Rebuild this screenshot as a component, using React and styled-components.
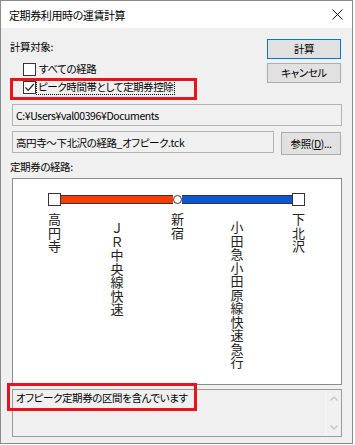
import React from 'react';
import styled, { createGlobalStyle } from 'styled-components';

const GlobalStyle = createGlobalStyle`
  html, body {
    margin: 0;
    padding: 0;
    background: #ffffff;
  }
  body {
    font-family: "Noto Sans CJK JP", "Noto Sans", sans-serif;
    font-size: 10.5px;
    letter-spacing: -0.4px;
    color: #000;
    font-feature-settings: "palt";
  }
`;

// Window frame
const Window = styled.div`
  box-sizing: border-box;
  width: 353px;
  height: 444px;
  border: 1px solid #8a8a8a;
  background: #f0f0f0;
  display: flex;
  flex-direction: column;
`;

const TitleBar = styled.div`
  height: 27px;
  background: #ffffff;
  display: flex;
  align-items: center;
  justify-content: space-between;
  padding: 0 9px 0 8px;
  font-size: 11px;
  line-height: 16px;
`;

const CloseButton = styled.div`
  width: 12px;
  height: 12px;
  display: flex;
  align-items: center;
  justify-content: center;
`;

const Body = styled.div`
  flex: 1;
  display: flex;
  flex-direction: column;
  padding: 11px 10px 0 11px;
`;

const TopRow = styled.div`
  display: flex;
  justify-content: space-between;
`;

const LeftCol = styled.div`
  display: flex;
  flex-direction: column;
`;

const RightCol = styled.div`
  display: flex;
  flex-direction: column;
  gap: 4px;
  margin-right: 1px;
`;

const Label = styled.div`
  line-height: 16px;
  height: 16px;
  margin-left: -2px;
  margin-top: ${props => props.$top || 0}px;
`;

const CheckRow = styled.div`
  position: relative;
  height: 18px;
  display: flex;
  align-items: center;
  padding-left: 11px;
  margin-top: ${props => props.$top || 0}px;
`;

const Box = styled.div`
  box-sizing: border-box;
  width: 13px;
  height: 13px;
  border: 1px solid #333;
  background: #fff;
  display: flex;
  align-items: center;
  justify-content: center;
`;

const CheckText = styled.span`
  line-height: 14px;
  margin-left: ${props => (props.$focus ? 0 : 1)}px;
  padding: 0 1px;
  border: 1px ${props => (props.$focus ? 'dotted #000' : 'solid transparent')};
`;

const Highlight = styled.div`
  position: absolute;
  box-sizing: border-box;
  border: 3px solid #e8141c;
  pointer-events: none;
  left: ${props => props.$left}px;
  top: ${props => props.$top}px;
  width: ${props => props.$w}px;
  height: ${props => props.$h}px;
`;

const Button = styled.div`
  box-sizing: border-box;
  width: ${props => props.$w || 74}px;
  height: ${props => props.$h || 20}px;
  background: #e1e1e1;
  border: 1px solid ${props => (props.$primary ? '#0078d7' : '#adadad')};
  display: flex;
  align-items: center;
  justify-content: center;
  line-height: 14px;
  margin-top: ${props => props.$top || 0}px;
  u {
    text-decoration: underline;
  }
`;

const Field = styled.div`
  box-sizing: border-box;
  width: ${props => props.$w || 330}px;
  height: 22px;
  border: 1px solid #b4b4b4;
  background: #f0f0f0;
  display: flex;
  align-items: center;
  padding-left: 3px;
  margin-top: ${props => props.$top || 0}px;
`;

const FileRow = styled.div`
  display: flex;
  align-items: flex-start;
  justify-content: space-between;
  margin-top: 5px;
  padding-right: 1px;
`;

// Route diagram
const RoutePanel = styled.div`
  box-sizing: border-box;
  width: 330px;
  height: 207px;
  margin-top: 3px;
  border: 1px solid #8c8c8c;
  background: #fff;
  padding: 14px 0 0 35px;
  display: flex;
  align-items: flex-start;
`;

const Column = styled.div`
  width: ${props => props.$w}px;
  display: flex;
  flex-direction: column;
  align-items: center;
`;

const StationSquare = styled.div`
  box-sizing: border-box;
  width: 13px;
  height: 13px;
  border: 1px solid #333;
  background: #fff;
`;

const StationDot = styled.div`
  box-sizing: border-box;
  width: 9px;
  height: 9px;
  margin-top: 2px;
  border: 1px solid #333;
  border-radius: 50%;
  background: #fff;
`;

const Bar = styled.div`
  box-sizing: border-box;
  width: 100%;
  height: 9px;
  margin-top: 2px;
  background: ${props => props.$color};
  border-top: 1px solid #333;
  border-bottom: 1px solid #333;
`;

const VerticalText = styled.div`
  writing-mode: vertical-rl;
  text-orientation: mixed;
  font-size: 13px;
  line-height: 13px;
  letter-spacing: 0.5px;
  font-feature-settings: normal;
  color: #222;
  margin-top: ${props => props.$top}px;
`;

// Status box
const StatusBox = styled.div`
  position: relative;
  box-sizing: border-box;
  width: 330px;
  height: 48px;
  margin-top: 4px;
  border: 1px solid #9a9a9a;
  background: #f0f0f0;
  display: flex;
`;

const StatusText = styled.div`
  flex: 1;
  padding: 0 3px;
  line-height: 16px;
`;

const ScrollBar = styled.div`
  width: 15px;
  border-left: 1px solid #f7f7f7;
  background: #f0f0f0;
  display: flex;
  flex-direction: column;
  align-items: center;
  justify-content: space-between;
  padding: 6px 0 6px;
`;

const Chevron = ({ down }) => (
  <svg width="8" height="5" viewBox="0 0 8 5">
    <polyline
      points={down ? '0.5,0.5 4,4 7.5,0.5' : '0.5,4.5 4,1 7.5,4.5'}
      fill="none"
      stroke="#c2c2c2"
      strokeWidth="1.2"
    />
  </svg>
);

const stations = [
  { type: 'square', name: '高円寺', w: 13, top: 7 },
  { type: 'line', name: 'ＪＲ中央線快速', w: 112, color: '#fa3c00', top: 18 },
  { type: 'dot', name: '新宿', w: 9, top: 9 },
  { type: 'line', name: '小田急小田原線快速急行', w: 110, color: '#0b58d2', top: 17 },
  { type: 'square', name: '下北沢', w: 13, top: 7 }
];

const App = () => {
  return (
    <>
      <GlobalStyle />
      <Window>
        <TitleBar>
          <span>定期券利用時の運賃計算</span>
          <CloseButton>
            <svg width="11" height="11" viewBox="0 0 11 11">
              <path d="M0.5 0.5 L10.5 10.5 M10.5 0.5 L0.5 10.5" stroke="#111" strokeWidth="1" />
            </svg>
          </CloseButton>
        </TitleBar>

        <Body>
          <TopRow>
            <LeftCol>
              <Label>計算対象:</Label>
              <CheckRow $top={5}>
                <Box />
                <CheckText>すべての経路</CheckText>
              </CheckRow>
              <CheckRow>
                <Box>
                  <svg width="11" height="11" viewBox="0 0 11 11">
                    <polyline points="1.5,5.5 4.2,8.3 9.8,2" fill="none" stroke="#222" strokeWidth="1.2" />
                  </svg>
                </Box>
                <CheckText $focus>ピーク時間帯として定期券控除</CheckText>
                <Highlight $left={-2} $top={0} $w={187} $h={22} />
              </CheckRow>
            </LeftCol>
            <RightCol>
              <Button $primary>計算</Button>
              <Button>キャンセル</Button>
            </RightCol>
          </TopRow>

          <Field $top={8}>C:¥Users¥val00396¥Documents</Field>

          <FileRow>
            <Field $w={262}>高円寺～下北沢の経路_オフピーク.tck</Field>
            <Button $w={60} $h={23} $top={1}>
              参照(<u>D</u>)...
            </Button>
          </FileRow>

          <Label $top={4}>定期券の経路:</Label>

          <RoutePanel>
            {stations.map((s, i) => (
              <Column key={i} $w={s.w}>
                {s.type === 'square' && <StationSquare />}
                {s.type === 'dot' && <StationDot />}
                {s.type === 'line' && <Bar $color={s.color} />}
                <VerticalText $top={s.top}>{s.name}</VerticalText>
              </Column>
            ))}
          </RoutePanel>

          <StatusBox>
            <StatusText>オフピーク定期券の区間を含んでいます</StatusText>
            <ScrollBar>
              <Chevron />
              <Chevron down />
            </ScrollBar>
            <Highlight $left={-6} $top={-7} $w={190} $h={28} />
          </StatusBox>
        </Body>
      </Window>
    </>
  );
};

export default App;
